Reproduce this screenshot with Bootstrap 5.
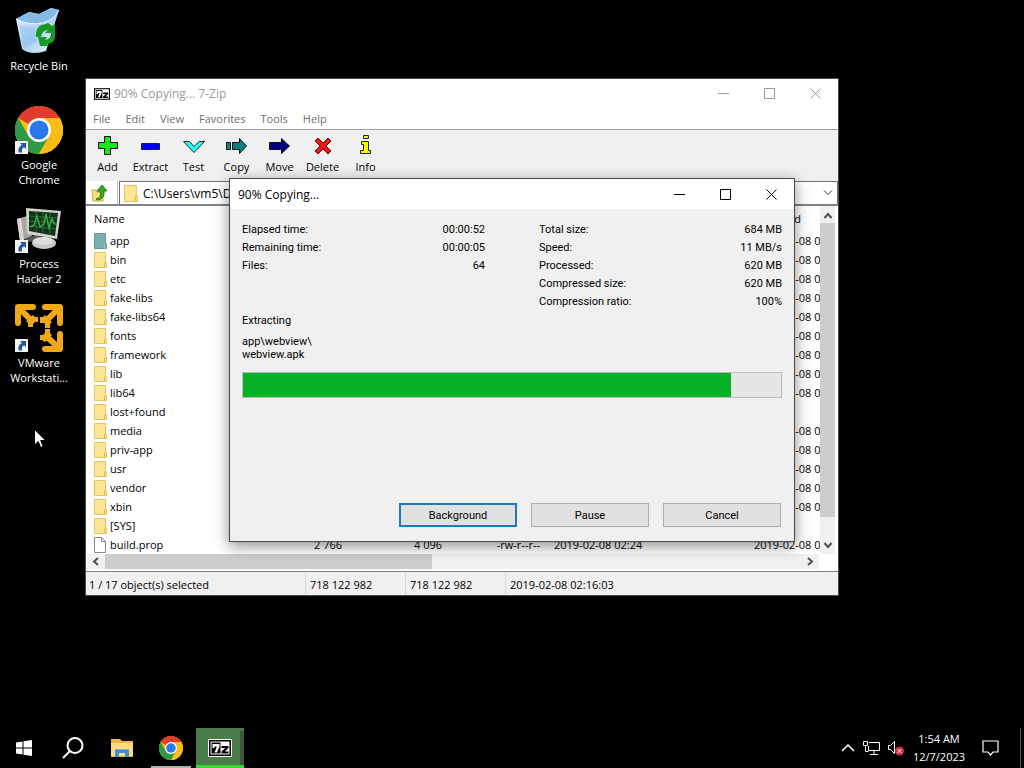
<!DOCTYPE html>
<html lang="en">
<head>
    <meta charset="UTF-8">
    <meta name="viewport" content="width=device-width, initial-scale=1.0">
    <title>90% Copying... 7-Zip</title>

    <!-- Bootstrap CDN -->
    <link href="https://cdn.jsdelivr.net/npm/bootstrap@5.3.0/dist/css/bootstrap.min.css" rel="stylesheet">

    <style>
        body {
            font-family: "Open Sans", "Noto Sans", sans-serif;
            font-size: 11px;
            line-height: 15px;
            background: #000;
            color: #000;
        }

        button, input {
            font: inherit;
            color: inherit;
        }

        .plain {
            border: 0;
            padding: 0;
            background: none;
        }

        svg {
            display: block;
            flex: none;
        }

        /* Desktop shortcuts */
        .shortcuts {
            width: 78px;
            padding-top: 7px;
        }

        .shortcut {
            min-height: 99px;
            gap: 3px;
            color: #fff;
            text-align: center;
            text-decoration: none;
        }

        /* Windows */
        .win {
            position: absolute;
            border: 1px solid #4a4a4a;
            background: #f0f0f0;
        }

        .manager {
            left: 85px;
            top: 78px;
            width: 754px;
        }

        .progress-dialog {
            left: 229px;
            top: 178px;
            width: 566px;
            box-shadow: 0 4px 14px rgba(0, 0, 0, .45);
        }

        .titlebar {
            height: 29px;
            padding-left: 8px;
            background: #fff;
            font-size: 12px;
        }

        .progress-dialog .titlebar {
            height: 30px;
        }

        .manager .titlebar {
            color: #999;
        }

        .caption-btn {
            width: 46px;
            height: 28px;
        }

        .menus {
            height: 21px;
            gap: 15px;
            padding-left: 7px;
            background: #fff;
            color: #6d6d6d;
        }

        .tools {
            height: 52px;
            padding-top: 5px;
            border-top: 1px solid #a0a0a0;
        }

        .tool {
            width: 43px;
            gap: 2px;
        }

        /* Address bar */
        .address {
            height: 25px;
            background: #fff;
            border-bottom: 2px solid #828282;
        }

        .up-btn {
            width: 32px;
            padding-left: 5px;
            margin-right: 1px;
            border-right: 1px solid #c8c8c8;
        }

        .path-box {
            border: 1px solid #707070;
            border-bottom: 0;
            padding: 0 4px;
            gap: 5px;
        }

        .path-box input {
            border: 0;
            padding: 0;
            background: none;
            outline: 0;
            font-size: 12px;
        }

        /* File list */
        .listing {
            background: #fff;
            padding: 0 3px 2px 1px;
        }

        .files {
            table-layout: fixed;
            width: 800px;
            white-space: nowrap;
        }

        .files th {
            height: 25px;
            padding: 0 7px;
            font-weight: 400;
        }

        .files td {
            height: 19px;
            padding: 0 7px;
        }

        .col-name { width: 156px; }
        .col-size { width: 106px; }
        .col-packed { width: 100px; }
        .col-mode { width: 98px; }
        .col-modified { width: 200px; }

        .name-cell {
            gap: 3px;
        }

        .vbar {
            width: 15px;
            background: #f0f0f0;
        }

        .vbar .thumb {
            height: 294px;
            background: #cdcdcd;
        }

        .hbar {
            height: 15px;
            background: #f0f0f0;
        }

        .hbar .thumb {
            width: 327px;
            background: #cdcdcd;
        }

        .scroll-btn {
            width: 18px;
            height: 17px;
        }

        .hbar .scroll-btn {
            height: 15px;
        }

        .statusbar {
            height: 24px;
            line-height: 25px;
            border-top: 1px solid #828282;
        }

        .statusbar div {
            width: 100px;
            padding: 0 4px;
            border-left: 1px solid #d9d9d9;
        }

        .statusbar .selected {
            width: 219px;
            padding-left: 3px;
            border: 0;
        }

        /* Copy dialog */
        .dialog-body {
            font-family: Roboto, "Liberation Sans", sans-serif;
            padding: 12px 12px 14px;
        }

        .stats {
            column-gap: 54px;
            line-height: 18px;
            min-height: 93px;
        }

        .current-file {
            line-height: 13px;
            min-height: 58px;
        }

        .copy-progress {
            height: 26px;
            border: 1px solid #bcbcbc;
            border-radius: 0;
            background: #e6e6e6;
        }

        .copy-progress .progress-bar {
            background: #06b025;
        }

        .actions {
            gap: 14px;
            margin-top: 105px;
            padding-right: 1px;
        }

        .actions button {
            width: 118px;
            height: 24px;
            border: 1px solid #adadad;
            background: #e1e1e1;
        }

        .actions .default-btn {
            border: 2px solid #1f7ab8;
        }

        /* Taskbar */
        .taskbar {
            height: 40px;
            color: #fff;
        }

        .tasks {
            gap: 1px;
        }

        .task {
            width: 48px;
            height: 40px;
            border-bottom: 3px solid transparent;
            border-top: 3px solid transparent;
        }

        .task-open {
            background: linear-gradient(#b0b0b0, #b0b0b0) bottom / 40px 2px no-repeat border-box;
        }

        .task-active {
            border-top-color: #4a7d4a;
            border-bottom-color: #35d82c;
            background: linear-gradient(90deg, #4a7d4a 44px, #3b563b 44px);
        }

        .tray {
            gap: 8px;
        }

        .clock {
            width: 54px;
            line-height: 18px;
            white-space: nowrap;
        }

        .notices {
            width: 50px;
        }

        .show-desktop {
            width: 4px;
            margin-left: 4px;
            border-left: 1px solid #555;
        }

        .pointer {
            position: absolute;
            left: 34px;
            top: 429px;
        }
    </style>
</head>
<body class="d-flex flex-column vh-100 overflow-hidden">

    <!-- Shared icons -->
    <svg width="0" height="0" class="position-absolute" aria-hidden="true">
        <symbol id="i-chrome" viewBox="0 0 48 48">
            <circle cx="24" cy="24" r="24" fill="#fbbc16"/>
            <path d="M24 24 3.2 12A24 24 0 0 1 44.8 12Z" fill="#e33b2e"/>
            <path d="M3.2 12A24 24 0 0 0 24 48L34.4 30 24 24 13.6 30Z" fill="#2e9a45"/>
            <path d="M24 12H44.8A24 24 0 0 1 24 48L34.4 30Z" fill="#fbbc16"/>
            <circle cx="24" cy="24" r="12" fill="#fff"/>
            <circle cx="24" cy="24" r="9.500" fill="#2979ea"/>
        </symbol>
        <symbol id="i-link" viewBox="0 0 13 13">
            <path d="M0 0h13v13H0z" fill="#f4f4f4"/>
            <path d="M5 2h6v6L9 6.300C7 7.500 6.500 9 7 11.500H4C2.500 8.500 4 5.500 6.800 4Z" fill="#28599b"/>
        </symbol>
        <symbol id="i-folder" viewBox="0 0 13 16">
            <path d="M.5.5h11v10h1v5H.5z" fill="#fde596" stroke="#e6c45c"/>
            <path d="M10.500 15.500v-4.500h1" fill="none" stroke="#dfb84a"/>
        </symbol>
        <symbol id="i-folder-sel" viewBox="0 0 13 16">
            <path d="M.5.5h11v10h1v5H.5z" fill="#7baeb1" stroke="#659a9c"/>
            <path d="M10.500 15.500v-4.500h1" fill="none" stroke="#b8bd78"/>
        </symbol>
        <symbol id="i-file" viewBox="0 0 13 16">
            <path d="M.5.5h7l4 4v11H.5z" fill="#fff" stroke="#868686"/>
            <path d="M7.500.5v4h4" fill="none" stroke="#868686"/>
        </symbol>
        <symbol id="i-7z" viewBox="0 0 22 16">
            <path d="M0 0h22v16H0z"/>
            <path d="M1.500 1.500h19v13h-19z" fill="#fff"/>
            <path d="M2.500 2.500h9v11h-9z"/>
            <path d="M3.500 4h7v2.500L8 12.500H5.500l2.300-6H5.500V8h-2z" fill="#fff"/>
            <path d="M12.500 6h7v2l-3.700 3.500h3.700v2h-7v-2L16.200 8h-3.700z"/>
        </symbol>
        <symbol id="i-min" viewBox="0 0 11 11"><path d="M0 5.500h11" stroke="currentColor"/></symbol>
        <symbol id="i-max" viewBox="0 0 11 11"><path d="M.5.5h10v10H.5z" fill="none" stroke="currentColor"/></symbol>
        <symbol id="i-close" viewBox="0 0 11 11"><path d="m.5.5 10 10m0-10-10 10" stroke="currentColor"/></symbol>
    </svg>

    <main class="flex-grow-1 position-relative">
        <nav class="shortcuts d-flex flex-column">
            <a href="#" class="shortcut d-flex flex-column align-items-center">
                <svg width="48" height="48" viewBox="0 0 48 48">
                    <defs>
                        <linearGradient id="bin" x1="0" y1="0" x2="1" y2="1">
                            <stop offset="0" stop-color="#e4f2fc"/>
                            <stop offset=".5" stop-color="#a9d0ef"/>
                            <stop offset="1" stop-color="#eef6fc"/>
                        </linearGradient>
                    </defs>
                    <path d="M1 12 7 42q9 7 24 2L44 3 36 1 24 7 14 5Z" fill="url(#bin)"/>
                    <path d="m1 12 13-7 10 2 12-6 8 2q-4 9-16 13-14 3-27-4Z" fill="#86bae6"/>
                    <path d="M1 12q13 7 27 4Q40 12 44 3" fill="none" stroke="#f0f8ff"/>
                    <path d="m5 19 4 22 13-6-3-14Z" fill="#8fbfec" opacity=".5"/>
                    <path d="M21 30q-1-12 10-13l2-1 4 3 3-2v9h-10l3-3q-6 0-7 7ZM37 26h3q1 11-8 11l2 2h-9l-2-9h9l-2 3q6-1 7-7Z" fill="#159a22"/>
                </svg>
                <span>Recycle Bin</span>
            </a>
            <a href="#" class="shortcut d-flex flex-column align-items-center">
                <svg width="48" height="48" viewBox="0 0 48 48">
                    <use href="#i-chrome"/>
                    <use href="#i-link" y="35" width="13" height="13"/>
                </svg>
                <span>Google<br>Chrome</span>
            </a>
            <a href="#" class="shortcut d-flex flex-column align-items-center">
                <svg width="48" height="48" viewBox="0 0 48 48">
                    <path d="m2 14 10-3 5 20-12 5Z" fill="#a8a8a4"/>
                    <path d="m2 14 3 22 4-1-3-22Z" fill="#d8d8d4"/>
                    <path d="m9 34 14-5 3 6-12 2Z" fill="#555"/>
                    <ellipse cx="29" cy="38" rx="12" ry="6" fill="#c9c9c5"/>
                    <ellipse cx="28" cy="36" rx="10" ry="4" fill="#deded9"/>
                    <path d="m11 3 35 3-4 28-30-5Z" fill="#d2d2ce"/>
                    <path d="m14 6 29 2-3 23-26-5Z" fill="#13341a"/>
                    <path d="m14 11 28 2m-28 3 28 2m-28 3 27 3M21 7v20m7-20v22m7-21v22" stroke="#2c6a35"/>
                    <path d="m15 22 4-2 3-9 3 11 4-3 2-10 3 14 3-9 3 6" fill="none" stroke="#3aa64c" stroke-width="1.500"/>
                    <use href="#i-link" y="35" width="13" height="13"/>
                </svg>
                <span>Process<br>Hacker 2</span>
            </a>
            <a href="#" class="shortcut d-flex flex-column align-items-center">
                <svg width="48" height="48" viewBox="0 0 48 48">
                    <g fill="none" stroke="#f0a818" stroke-width="6" stroke-linecap="round" stroke-linejoin="round">
                        <path d="M3 19V3h15M4 4l13 13"/>
                        <path d="M45 19V3H30M44 4 31 17"/>
                        <path d="M45 30v15H30M44 44 31 32"/>
                    </g>
                    <g fill="#f0a818">
                        <path d="m18 11 2 2h3v5h-5v5h-5v-4l-2-2Z"/>
                        <path d="m30 11 7 7-2 2v4h-5v-5h-5v-6h3Z"/>
                        <path d="m37 31-7 7-3-2h-2v-5h5v-6h5v4Z"/>
                    </g>
                    <use href="#i-link" y="35" width="13" height="13"/>
                </svg>
                <span>VMware<br>Workstati...</span>
            </a>
        </nav>

        <!-- File manager -->
        <section class="win manager">
            <div class="titlebar d-flex align-items-center">
                <svg width="16" height="12" class="me-1"><use href="#i-7z"/></svg>
                <span class="flex-grow-1">90% Copying... 7-Zip</span>
                <button class="plain caption-btn d-flex align-items-center justify-content-center" aria-label="Minimize"><svg width="11" height="11"><use href="#i-min"/></svg></button>
                <button class="plain caption-btn d-flex align-items-center justify-content-center" aria-label="Maximize"><svg width="11" height="11"><use href="#i-max"/></svg></button>
                <button class="plain caption-btn d-flex align-items-center justify-content-center" aria-label="Close"><svg width="11" height="11"><use href="#i-close"/></svg></button>
            </div>
            <div class="menus d-flex align-items-center">
                <button class="plain">File</button>
                <button class="plain">Edit</button>
                <button class="plain">View</button>
                <button class="plain">Favorites</button>
                <button class="plain">Tools</button>
                <button class="plain">Help</button>
            </div>
            <div class="tools d-flex align-items-start">
                <button class="plain tool d-flex flex-column align-items-center">
                    <svg width="22" height="22"><path d="M7.500 1.500h6v6h7v6h-7v6h-6v-6h-6v-6h6z" fill="#17e617" stroke="#111"/></svg>
                    Add
                </button>
                <button class="plain tool d-flex flex-column align-items-center">
                    <svg width="22" height="22"><path d="M1.500 8.500h18v6h-18z" fill="#0000f0" stroke="#222"/></svg>
                    Extract
                </button>
                <button class="plain tool d-flex flex-column align-items-center">
                    <svg width="22" height="22"><path d="M.5 6.500h6l4.500 5 5-5h5.500L11 17.500z" fill="#2ff" stroke="#222"/></svg>
                    Test
                </button>
                <button class="plain tool d-flex flex-column align-items-center">
                    <svg width="22" height="22"><path d="M.5 7.500h4v7h-4zM6.500 7.500h7v-4l7 7.500-7 7.500v-4h-7z" fill="#088080" stroke="#111"/></svg>
                    Copy
                </button>
                <button class="plain tool d-flex flex-column align-items-center">
                    <svg width="22" height="22"><path d="M.5 7.500h12v-4l8 7.500-8 7.500v-4h-12z" fill="#000080" stroke="#111"/></svg>
                    Move
                </button>
                <button class="plain tool d-flex flex-column align-items-center">
                    <svg width="22" height="22"><path d="m3 6 3-3 5 5 5-5 3 3-5 5 5 5-3 3-5-5-5 5-3-3 5-5z" fill="#f01414" stroke="#511"/></svg>
                    Delete
                </button>
                <button class="plain tool d-flex flex-column align-items-center">
                    <svg width="22" height="22"><path d="M8.500.5h5v3h-5zM6.500 6.500h7v9h2v3h-10v-3h3v-6h-2z" fill="#f6f600" stroke="#222"/></svg>
                    Info
                </button>
            </div>
            <div class="address d-flex">
                <button class="plain up-btn" aria-label="Up">
                    <svg width="17" height="18" viewBox="0 0 17 18">
                        <path d="M1 6h4l1 2h6v9H2z" fill="#f8dd7c" stroke="#ccab42"/>
                        <path d="M5 15q6-1 4-8H6l5-6 5 6h-3q1 8-6 9Z" fill="#35ab24" stroke="#247d18"/>
                    </svg>
                </button>
                <div class="path-box d-flex flex-grow-1 align-items-center">
                    <svg width="14" height="17"><use href="#i-folder"/></svg>
                    <input type="text" class="flex-grow-1" value="C:\Users\vm5\Desktop\" aria-label="Path">
                    <button class="plain" aria-label="Show folders"><svg width="10" height="6"><path d="m1 .5 4 4 4-4" fill="none" stroke="#333"/></svg></button>
                </div>
            </div>
            <div class="listing">
                <div class="d-flex">
                    <div class="flex-grow-1 overflow-hidden">
                        <table class="files">
                            <thead>
                                <tr>
                                    <th class="col-name">Name</th>
                                    <th class="col-size"></th>
                                    <th class="col-packed"></th>
                                    <th class="col-mode"></th>
                                    <th class="col-modified"></th>
                                    <th>Accessed</th>
                                </tr>
                            </thead>
                            <tbody id="fileRows"></tbody>
                        </table>
                    </div>
                    <div class="vbar d-flex flex-column flex-shrink-0">
                        <svg class="scroll-btn align-self-center" viewBox="0 0 18 17"><path d="m5.500 12 3.500-4 3.500 4" fill="none" stroke="#505050" stroke-width="2"/></svg>
                        <div class="thumb"></div>
                        <svg class="scroll-btn align-self-center mt-auto" viewBox="0 0 18 17"><path d="m5.500 6 3.500 4 3.500-4" fill="none" stroke="#505050" stroke-width="2"/></svg>
                    </div>
                </div>
                <div class="hbar d-flex me-3">
                    <svg class="scroll-btn" viewBox="0 0 18 15"><path d="m11 4-4 3.500 4 3.500" fill="none" stroke="#505050" stroke-width="2"/></svg>
                    <div class="thumb"></div>
                    <svg class="scroll-btn ms-auto" viewBox="0 0 18 15"><path d="m7 4 4 3.500-4 3.500" fill="none" stroke="#505050" stroke-width="2"/></svg>
                </div>
            </div>
            <div class="statusbar d-flex">
                <div class="selected">1 / 17 object(s) selected</div>
                <div>718 122 982</div>
                <div>718 122 982</div>
                <div class="flex-grow-1">2019-02-08 02:16:03</div>
            </div>
        </section>

        <!-- Copy progress -->
        <section class="win progress-dialog" role="dialog" aria-label="90% Copying...">
            <div class="titlebar d-flex align-items-center">
                <span class="flex-grow-1">90% Copying...</span>
                <button class="plain caption-btn d-flex align-items-center justify-content-center" aria-label="Minimize"><svg width="11" height="11"><use href="#i-min"/></svg></button>
                <button class="plain caption-btn d-flex align-items-center justify-content-center" aria-label="Maximize"><svg width="11" height="11"><use href="#i-max"/></svg></button>
                <button class="plain caption-btn d-flex align-items-center justify-content-center" aria-label="Close"><svg width="11" height="11"><use href="#i-close"/></svg></button>
            </div>
            <div class="dialog-body">
                <div class="stats d-flex">
                    <div class="flex-fill w-50">
                        <div class="d-flex justify-content-between"><span>Elapsed time:</span><span>00:00:52</span></div>
                        <div class="d-flex justify-content-between"><span>Remaining time:</span><span>00:00:05</span></div>
                        <div class="d-flex justify-content-between"><span>Files:</span><span>64</span></div>
                    </div>
                    <div class="flex-fill w-50">
                        <div class="d-flex justify-content-between"><span>Total size:</span><span>684 MB</span></div>
                        <div class="d-flex justify-content-between"><span>Speed:</span><span>11 MB/s</span></div>
                        <div class="d-flex justify-content-between"><span>Processed:</span><span>620 MB</span></div>
                        <div class="d-flex justify-content-between"><span>Compressed size:</span><span>620 MB</span></div>
                        <div class="d-flex justify-content-between"><span>Compression ratio:</span><span>100%</span></div>
                    </div>
                </div>
                <div class="current-file">
                    <div class="mb-2">Extracting</div>
                    <div>app\webview\<br>webview.apk</div>
                </div>
                <div class="progress copy-progress" role="progressbar" aria-label="Copying" aria-valuenow="620" aria-valuemin="0" aria-valuemax="684">
                    <div class="progress-bar" id="copyBar"></div>
                </div>
                <div class="actions d-flex justify-content-end">
                    <button class="default-btn p-0">Background</button>
                    <button class="p-0">Pause</button>
                    <button class="p-0">Cancel</button>
                </div>
            </div>
        </section>

        <svg class="pointer" width="12" height="19" viewBox="0 0 12 19">
            <path d="M.5.5v15.500l3.700-3.500 2.500 6 2.500-1-2.500-6h5z" fill="#fff" stroke="#000"/>
        </svg>
    </main>

    <footer class="taskbar d-flex justify-content-between flex-shrink-0">
        <div class="tasks d-flex">
            <button class="plain task d-flex align-items-center justify-content-center" aria-label="Start">
                <svg width="16" height="16"><path d="M0 2.500 6.500 1.500V7.500H0ZM7.500 1.300 16 0V7.500H7.500ZM0 8.500H6.500V14.500L0 13.500ZM7.500 8.500H16V16L7.500 14.700Z" fill="#fff"/></svg>
            </button>
            <button class="plain task d-flex align-items-center justify-content-center" aria-label="Search">
                <svg width="22" height="22"><circle cx="13" cy="8.500" r="7.500" fill="none" stroke="#fff" stroke-width="2"/><path d="m8 14-7 7" stroke="#fff" stroke-width="2"/></svg>
            </button>
            <button class="plain task d-flex align-items-center justify-content-center" aria-label="File Explorer">
                <svg width="22" height="20"><path d="M0 1h9l2 2h11v16H0z" fill="#e9b94c"/><path d="M0 5h22v13H0z" fill="#fddc80"/><path d="M4 19v-8h14v8h-4v-4H8v4z" fill="#4091c9"/><path d="M4 11h14v1H4z" fill="#73b5df"/></svg>
            </button>
            <button class="plain task task-open d-flex align-items-center justify-content-center" aria-label="Google Chrome">
                <svg width="24" height="24"><use href="#i-chrome"/></svg>
            </button>
            <button class="plain task task-active d-flex align-items-center justify-content-center" aria-label="7-Zip">
                <svg width="24" height="18"><path d="M0 0h24v18H0z" fill="#fff"/><use href="#i-7z" x="1" y="1" width="22" height="16"/></svg>
            </button>
        </div>
        <div class="tray d-flex align-items-center">
            <button class="plain" aria-label="Show hidden icons"><svg width="14" height="8"><path d="m1 7 6-6 6 6" fill="none" stroke="#fff" stroke-width="1.500"/></svg></button>
            <button class="plain" aria-label="Network"><svg width="17" height="14"><path d="M6 1.500h10.500v8h-11V5M11 9.500v4M7 13.500h8M.5.5h4v4h-4zM2.500 4.500v6h3" fill="none" stroke="#fff"/></svg></button>
            <button class="plain" aria-label="Volume"><svg width="16" height="16"><path d="M.5 5.500h2l4-4v12l-4-4h-2z" fill="none" stroke="#fff"/><circle cx="11.500" cy="11" r="4.500" fill="#c8323f"/><path d="m9.500 9 4 4m0-4-4 4" stroke="#fff"/></svg></button>
            <div class="d-flex align-self-stretch">
                <button class="plain clock">1:54 AM<br>12/7/2023</button>
                <button class="plain notices d-flex align-items-center" aria-label="Notifications"><svg width="18" height="16" class="mx-auto"><path d="M1 1h15v11h-5l-2.500 3L6 12H1z" fill="none" stroke="#fff" stroke-width="1.200"/></svg></button>
                <div class="show-desktop"></div>
            </div>
        </div>
    </footer>

    <!-- Bootstrap JS -->
    <script src="https://cdn.jsdelivr.net/npm/bootstrap@5.3.0/dist/js/bootstrap.bundle.min.js"></script>

    <script>
        var date = "2019-02-08 02:24";
        var files = [
            { name: "app", icon: "folder-sel", accessed: date },
            { name: "bin", accessed: date },
            { name: "etc", accessed: date },
            { name: "fake-libs", accessed: date },
            { name: "fake-libs64", accessed: date },
            { name: "fonts", accessed: date },
            { name: "framework", accessed: date },
            { name: "lib", accessed: date },
            { name: "lib64", accessed: date },
            { name: "lost+found" },
            { name: "media", accessed: date },
            { name: "priv-app", accessed: date },
            { name: "usr", accessed: date },
            { name: "vendor", accessed: date },
            { name: "xbin", accessed: date },
            { name: "[SYS]" },
            { name: "build.prop", icon: "file", size: "2 766", packed: "4 096", mode: "-rw-r--r--", modified: date, accessed: date }
        ];

        document.getElementById("fileRows").innerHTML = files.map(function(f) {
            return `<tr>
                <td><div class="name-cell d-flex align-items-center"><svg width="13" height="16"><use href="#i-${f.icon || "folder"}"/></svg>${f.name}</div></td>
                <td class="text-end">${f.size || ""}</td>
                <td class="text-end">${f.packed || ""}</td>
                <td class="text-end">${f.mode || ""}</td>
                <td>${f.modified || ""}</td>
                <td>${f.accessed || ""}</td>
            </tr>`;
        }).join("");

        // Width follows processed / total megabytes
        var bar = document.getElementById("copyBar");
        var progress = bar.parentElement;
        bar.style.width = progress.getAttribute("aria-valuenow") / progress.getAttribute("aria-valuemax") * 100 + "%";
    </script>
</body>
</html>
